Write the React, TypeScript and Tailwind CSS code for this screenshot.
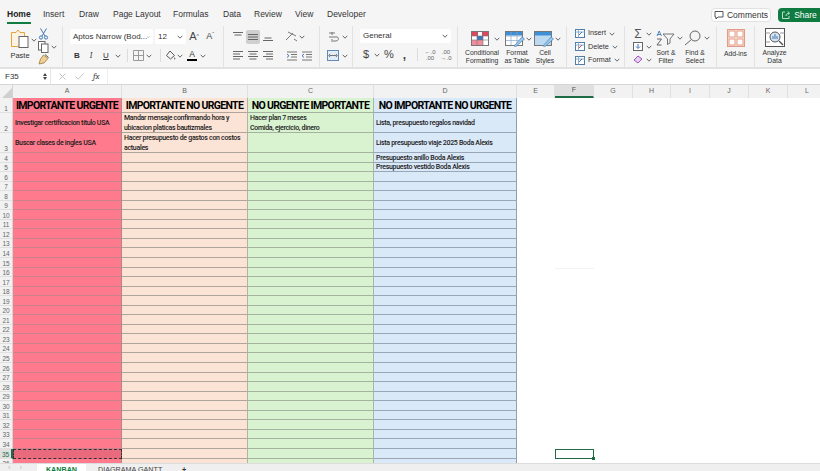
import React from "react";

const Chev = ({ c = "" }: { c?: string }) => (
  <svg width="6" height="4" viewBox="0 0 6 4" className={c}>
    <path d="M0.7 0.8 L3 3.2 L5.3 0.8" fill="none" stroke="#666" strokeWidth="1" />
  </svg>
);

const Box = ({ w, children }: { w: string; children?: React.ReactNode }) => (
  <div className={`${w} h-full flex items-center justify-center shrink-0`}>{children}</div>
);

const Lines = ({ d }: { d: string }) => (
  <svg width="12" height="11" viewBox="0 0 12 11">
    <path d={d} stroke="#666" strokeWidth="1" fill="none" />
  </svg>
);

const Divider = () => <div className="w-px h-[13px] bg-[#dcdcdc] shrink-0" />;

const tabs: [string, string][] = [
  ["Home", "w-[36px]"],
  ["Insert", "w-[36px]"],
  ["Draw", "w-[34px]"],
  ["Page Layout", "w-[60px]"],
  ["Formulas", "w-[50px]"],
  ["Data", "w-[31px]"],
  ["Review", "w-[41px]"],
  ["View", "w-[32px]"],
  ["Developer", "w-[50px]"],
];

function TabBar() {
  return (
    <div className="h-[26px] flex items-start pl-[7px] bg-[#f5f5f5] shrink-0">
      {tabs.map(([t, w]) => (
        <div key={t} className={`${w} pt-[9px] text-[8.5px] leading-[11px] text-[#333] whitespace-nowrap`}>
          <span className={t === "Home" ? "inline-block border-b-2 border-[#107c41] pb-[2px] font-bold text-[#222]" : ""}>{t}</span>
        </div>
      ))}
      <div className="ml-auto flex items-center pt-[8px]">
        <div className="w-[60px] h-[14px] bg-white border border-[#e2e2e2] rounded-[4px] flex items-center justify-center gap-[3px] text-[8.5px] text-[#333]">
          <svg width="10" height="10" viewBox="0 0 10 10">
            <path d="M1 1.5 H9 V7 H4 L2 9 V7 H1 Z" fill="none" stroke="#444" strokeWidth="0.9" />
          </svg>
          Comments
        </div>
        <div className="ml-[7px] w-[42px] h-[14px] bg-[#0f7b41] rounded-l-[4px] flex items-center justify-center gap-[3px] text-[8.5px] text-white">
          <svg width="10" height="10" viewBox="0 0 10 10">
            <path d="M4 2 H1.5 V8.5 H8 V6 M5 6 C5 4 6 3.2 8 3.2 M6.7 1.5 L8.6 3.2 L6.7 5" fill="none" stroke="#cfe9da" strokeWidth="0.9" />
          </svg>
          Share
        </div>
      </div>
    </div>
  );
}

function Clipboard() {
  return (
    <div className="w-[62px] flex shrink-0 pl-[9px]">
      <div className="w-[22px] flex flex-col items-center pt-[3px]">
        <svg width="20" height="19" viewBox="0 0 20 19">
          <path d="M1.5 3.5 H6 L8 1 L10 3.5 H14.5 V17.5 H1.5 Z" fill="#fdf3e2" stroke="#e8a33d" strokeWidth="1" />
          <rect x="9" y="7.5" width="9" height="11" fill="#fff" stroke="#666" strokeWidth="1" />
        </svg>
        <div className="mt-[3px] text-[7.5px] leading-[9px] text-[#333]">Paste</div>
      </div>
      <div className="w-[6px] pt-[12px]"><Chev /></div>
      <div className="flex flex-col items-start pl-[1px] pt-[2px] gap-[1px]">
        <svg width="11" height="12" viewBox="0 0 11 12">
          <path d="M2.5 0.5 L7 8 M8.5 0.5 L4 8" stroke="#3f76b5" strokeWidth="1" />
          <circle cx="3" cy="9.5" r="1.6" fill="none" stroke="#3f76b5" />
          <circle cx="8" cy="9.5" r="1.6" fill="none" stroke="#3f76b5" />
        </svg>
        <div className="flex items-center gap-[2px]">
          <svg width="11" height="12" viewBox="0 0 11 12">
            <rect x="0.5" y="0.5" width="6.5" height="8.5" fill="#fff" stroke="#666" />
            <rect x="3.5" y="3" width="6.5" height="8.5" fill="#fff" stroke="#666" />
          </svg>
          <Chev />
        </div>
        <svg width="11" height="11" viewBox="0 0 11 11">
          <path d="M5.5 1 L10 4.5 L6 9 L1 10 L2.5 5 Z" fill="#f0cf94" stroke="#9b7a3d" strokeWidth="0.8" />
          <path d="M7 0.5 L10.5 3.5" stroke="#555" />
        </svg>
      </div>
    </div>
  );
}

function FontGroup() {
  return (
    <div className="w-[161px] flex flex-col gap-[4px] pl-[7px] pt-[3px] shrink-0 border-l border-[#e2e2e2]">
      <div className="h-[15px] flex items-center">
        <div className="w-[83px] h-full bg-white rounded-[2px] flex items-center justify-between px-[3px] text-[8px] text-[#333] whitespace-nowrap">
          Aptos Narrow (Bod... <Chev />
        </div>
        <div className="ml-[2px] w-[31px] h-full bg-white rounded-[2px] flex items-center justify-between px-[3px] text-[8px] text-[#333]">
          12 <Chev />
        </div>
        <Box w="w-[16px]"><span className="text-[11px] text-[#444]">A<sup className="text-[5px]">^</sup></span></Box>
        <Box w="w-[16px]"><span className="text-[9px] text-[#444]">A<sup className="text-[5px]">ˇ</sup></span></Box>
      </div>
      <div className="h-[15px] flex items-center text-[8px] text-[#333]">
        <Box w="w-[14px]"><b>B</b></Box>
        <Box w="w-[14px]"><i className="font-serif">I</i></Box>
        <Box w="w-[16px]"><u>U</u></Box>
        <Box w="w-[8px]"><Chev /></Box>
        <div className="ml-[5px] mr-[3px]"><Divider /></div>
        <Box w="w-[14px]">
          <svg width="11" height="11" viewBox="0 0 11 11">
            <path d="M0.5 0.5 H10.5 V10.5 H0.5 Z M5.5 0.5 V10.5 M0.5 5.5 H10.5" fill="none" stroke="#999" />
          </svg>
        </Box>
        <Box w="w-[8px]"><Chev /></Box>
        <div className="ml-[7px] mr-[3px]"><Divider /></div>
        <Box w="w-[12px]">
          <svg width="11" height="11" viewBox="0 0 11 11">
            <path d="M5 1 L9.5 5.5 L5.5 9 L1.5 5.5 Z" fill="none" stroke="#555" />
            <path d="M9.5 7 L10.5 9 L9 9.5 Z" fill="#555" />
          </svg>
        </Box>
        <Box w="w-[8px]"><Chev /></Box>
        <div className="ml-[2px] w-[12px] flex flex-col items-center leading-[8px] text-[#333] text-[8.5px]">
          A
          <div className="mt-[1px] w-[10px] h-[2px] bg-black" />
        </div>
        <Box w="w-[9px]"><Chev /></Box>
      </div>
    </div>
  );
}

const L1 = "M1 1.5 H11 M2.5 4 H9.5";
const L2 = "M1 3.5 H11 M1 6 H11 M1 8.5 H11";
const L3 = "M2.5 7 H9.5 M1 9.5 H11";
const A1 = "M1 1.5 H11 M1 4 H8 M1 6.5 H11 M1 9 H8";
const A2 = "M1 1.5 H11 M2.5 4 H9.5 M1 6.5 H11 M2.5 9 H9.5";
const A3 = "M1 1.5 H11 M4 4 H11 M1 6.5 H11 M4 9 H11";

function AlignGroup() {
  return (
    <div className="w-[96px] flex flex-col gap-[4px] pl-[6px] pt-[3px] shrink-0 border-l border-[#e2e2e2]">
      <div className="h-[15px] flex items-center">
        <Box w="w-[15px]"><Lines d={L1} /></Box>
        <div className="w-[14px] h-[14px] ml-[1px] bg-[#cfcfcf] rounded-[2px] flex items-center justify-center"><Lines d={L2} /></div>
        <Box w="w-[16px]"><Lines d={L3} /></Box>
        <div className="ml-[8px] h-full"><Box w="w-[14px]">
          <svg width="13" height="11" viewBox="0 0 13 11">
            <path d="M1 9 L8 2 M3 1 L11 5 M9 8 L12 10" stroke="#777" fill="none" />
          </svg>
        </Box></div>
        <Box w="w-[8px]"><Chev /></Box>
      </div>
      <div className="h-[15px] flex items-center">
        <Box w="w-[15px]"><Lines d={A1} /></Box>
        <Box w="w-[15px]"><Lines d={A2} /></Box>
        <Box w="w-[16px]"><Lines d={A3} /></Box>
        <div className="ml-[8px] h-full"><Box w="w-[15px]">
          <svg width="12" height="10" viewBox="0 0 12 10"><path d="M1 1 H11 M5 3.5 H11 M5 6 H11 M1 9 H11" stroke="#777" fill="none" /><path d="M1 3 L3 4.7 L1 6.5" stroke="#3f76b5" fill="none" /></svg>
        </Box></div>
        <Box w="w-[15px]">
          <svg width="12" height="10" viewBox="0 0 12 10"><path d="M1 1 H11 M5 3.5 H11 M5 6 H11 M1 9 H11" stroke="#777" fill="none" /><path d="M3 3 L1 4.7 L3 6.5" stroke="#3f76b5" fill="none" /></svg>
        </Box>
      </div>
    </div>
  );
}

function WrapGroup() {
  return (
    <div className="w-[33px] flex flex-col gap-[4px] pl-[6px] pt-[3px] shrink-0 border-l border-[#e2e2e2]">
      <div className="h-[15px] flex items-center">
        <Box w="w-[14px]">
          <svg width="11" height="12" viewBox="0 0 11 12"><path d="M1 2 H7 M1 6 H9 C11 6 11 10 8 10 H5 M4 1 V4 M4 8 V11" stroke="#777" fill="none" /></svg>
        </Box>
        <Box w="w-[9px]"><Chev /></Box>
      </div>
      <div className="h-[15px] flex items-center">
        <Box w="w-[14px]">
          <svg width="12" height="11" viewBox="0 0 12 11"><rect x="0.5" y="0.5" width="11" height="10" fill="#e3edf6" stroke="#5f8bb5" /><path d="M2.5 5.5 H9.5 M3 4 L1.8 5.5 L3 7 M9 4 L10.2 5.5 L9 7" stroke="#555" strokeWidth="0.8" fill="none" /></svg>
        </Box>
        <Box w="w-[9px]"><Chev /></Box>
      </div>
    </div>
  );
}

function NumberGroup() {
  return (
    <div className="w-[105px] flex flex-col gap-[4px] pl-[7px] pt-[3px] shrink-0 border-l border-[#e2e2e2]">
      <div className="h-[14px] w-[91px] bg-white rounded-[2px] flex items-center justify-between px-[3px] text-[8px] text-[#333]">
        General <Chev />
      </div>
      <div className="h-[15px] flex items-center text-[#444]">
        <Box w="w-[12px]"><span className="text-[11px]">$</span></Box>
        <Box w="w-[10px]"><Chev /></Box>
        <Box w="w-[14px]"><span className="text-[11px]">%</span></Box>
        <Box w="w-[17px]"><span className="text-[12px] font-bold leading-[10px]">,</span></Box>
        <div className="ml-[4px] mr-[4px]"><Divider /></div>
        <Box w="w-[16px]"><span className="text-[6px] leading-[6px] text-center text-[#666]">←.0<br />.00</span></Box>
        <Box w="w-[16px]"><span className="text-[6px] leading-[6px] text-center text-[#666]">.00<br />→.0</span></Box>
      </div>
    </div>
  );
}

const Lbl = ({ a, b }: { a: string; b?: string }) => (
  <div className="text-[6.8px] leading-[8px] text-center text-[#333] whitespace-nowrap">
    {a}
    {b && <br />}
    {b}
  </div>
);

function TableIcon({ kind }: { kind: "cond" | "table" | "styles" }) {
  return (
    <svg width="20" height="16" viewBox="0 0 20 16">
      {kind === "cond" ? (
        <>
          <rect x="0.5" y="0.5" width="17" height="14" fill="#fff" stroke="#777" />
          <rect x="1" y="1" width="6" height="4" fill="#e0475b" />
          <rect x="11" y="1" width="6" height="4" fill="#e0475b" />
          <rect x="6" y="5" width="6" height="4" fill="#3f76b5" />
          <rect x="1" y="9" width="11" height="5" fill="#f08c9c" />
          <path d="M6 1 V14 M12 1 V14 M1 5 H17 M1 9 H17" stroke="#777" strokeWidth="0.6" />
        </>
      ) : kind === "table" ? (
        <>
          <rect x="0.5" y="0.5" width="17" height="14" fill="#fff" stroke="#777" />
          <rect x="1" y="1" width="16" height="3.5" fill="#3f8fd6" />
          <path d="M6 1 V14 M12 1 V14 M1 5 H17 M1 9.5 H17" stroke="#8aa8c4" strokeWidth="0.7" />
          <path d="M9 15 L17 6 L19.5 8 L11 15.5 Z" fill="#9cc6ea" stroke="#4a84b8" strokeWidth="0.7" />
        </>
      ) : (
        <>
          <rect x="0.5" y="0.5" width="17" height="14" fill="#bcd9f2" stroke="#777" />
          <rect x="1" y="1" width="16" height="3.5" fill="#3f8fd6" />
          <path d="M9 15 L17 6 L19.5 8 L11 15.5 Z" fill="#9cc6ea" stroke="#4a84b8" strokeWidth="0.7" />
        </>
      )}
    </svg>
  );
}

function StylesGroup() {
  return (
    <div className="w-[109px] flex pt-[4px] shrink-0 border-l border-[#e2e2e2]">
      <div className="w-[46px] flex flex-col items-center pl-[2px]">
        <div className="h-[17px] flex items-center gap-[3px] pl-[6px]"><TableIcon kind="cond" /><Chev /></div>
        <div className="mt-[2px]"><Lbl a="Conditional" b="Formatting" /></div>
      </div>
      <div className="w-[26px] flex flex-col items-center">
        <div className="h-[17px] flex items-center gap-[1px] pl-[2px]"><TableIcon kind="table" /><Chev /></div>
        <div className="mt-[2px]"><Lbl a="Format" b="as Table" /></div>
      </div>
      <div className="w-[30px] flex flex-col items-center">
        <div className="h-[17px] flex items-center gap-[1px] pl-[4px]"><TableIcon kind="styles" /><Chev /></div>
        <div className="mt-[2px]"><Lbl a="Cell" b="Styles" /></div>
      </div>
    </div>
  );
}

function CellsGroup() {
  const rows: [string, string][] = [
    ["Insert", "#3f76b5"],
    ["Delete", "#c9485b"],
    ["Format", "#3f76b5"],
  ];
  return (
    <div className="w-[58px] flex flex-col pl-[8px] pt-[1px] shrink-0 border-l border-[#e2e2e2]">
      {rows.map(([t, c]) => (
        <div key={t} className="h-[13.5px] flex items-center text-[7.2px] text-[#333]">
          <svg width="10" height="9" viewBox="0 0 10 9" className="mr-[3px]">
            <rect x="0.5" y="0.5" width="9" height="8" fill="#fff" stroke="#4e7ea8" />
            <path d="M0.5 3 H9.5 M3.5 0.5 V8.5" stroke="#8fb0cc" />
            <path d="M4 6 L7 3" stroke={c} />
          </svg>
          <span className="mr-[3px]">{t}</span>
          <Chev />
        </div>
      ))}
    </div>
  );
}

function EditGroup() {
  return (
    <div className="w-[92px] flex pl-[8px] pt-[1px] shrink-0 border-l border-[#e2e2e2]">
      <div className="w-[23px] flex flex-col">
        <div className="h-[13px] flex items-center gap-[3px]">
          <span className="w-[10px] text-[12px] leading-[12px] text-[#555] text-center">Σ</span><Chev />
        </div>
        <div className="h-[13px] flex items-center gap-[3px]">
          <svg width="10" height="9" viewBox="0 0 10 9"><rect x="0.5" y="0.5" width="9" height="8" fill="#fff" stroke="#666" /><path d="M5 2 V6 M3 4.5 L5 6.5 L7 4.5" stroke="#3f76b5" fill="none" /></svg>
          <Chev />
        </div>
        <div className="h-[13px] flex items-center gap-[3px]">
          <svg width="10" height="9" viewBox="0 0 10 9"><path d="M1 5 L5 1 L9 4 L5 8 Z" fill="#e6d3f0" stroke="#a34fc0" /></svg>
          <Chev />
        </div>
      </div>
      <div className="w-[28px] flex flex-col items-start pt-[2px]">
        <div className="h-[17px] flex items-center gap-[2px]">
          <svg width="19" height="16" viewBox="0 0 19 16">
            <path d="M1 6 L3.2 1 L5.4 6 M1.7 4.5 H4.7" stroke="#3f76b5" strokeWidth="0.9" fill="none" />
            <path d="M1 9 H5.5 L1 15 H5.5" stroke="#555" strokeWidth="0.9" fill="none" />
            <path d="M7 4 H18 L14 9 V13 L11.5 14.5 V9 Z" fill="none" stroke="#666" strokeWidth="0.9" />
          </svg>
          <Chev />
        </div>
        <div className="mt-[3px] w-[20px]"><Lbl a="Sort &" b="Filter" /></div>
      </div>
      <div className="w-[30px] flex flex-col items-start pt-[2px]">
        <div className="h-[17px] flex items-center gap-[2px]">
          <svg width="18" height="16" viewBox="0 0 18 16">
            <circle cx="11" cy="6" r="5" fill="none" stroke="#666" />
            <path d="M7.5 9.5 L1 15" stroke="#666" />
          </svg>
          <Chev />
        </div>
        <div className="mt-[3px] w-[22px]"><Lbl a="Find &" b="Select" /></div>
      </div>
    </div>
  );
}

function AddinsGroup() {
  return (
    <div className="w-[38px] flex flex-col items-center pt-[3px] shrink-0 border-l border-[#e2e2e2]">
      <svg width="18" height="18" viewBox="0 0 18 18">
        <rect x="0.5" y="0.5" width="17" height="17" fill="#fbe6df" stroke="#e39b86" />
        <rect x="2" y="2" width="6" height="6" fill="#fff" stroke="#e39b86" />
        <rect x="10" y="2" width="6" height="6" fill="#fff" stroke="#e39b86" />
        <rect x="2" y="10" width="6" height="6" fill="#fff" stroke="#e39b86" />
        <rect x="10" y="10" width="6" height="6" fill="#fff" stroke="#e39b86" />
      </svg>
      <div className="mt-[3px]"><Lbl a="Add-ins" /></div>
    </div>
  );
}

function AnalyzeGroup() {
  return (
    <div className="w-[40px] flex flex-col items-center pt-[2px] border-l border-[#e2e2e2]">
      <svg width="20" height="20" viewBox="0 0 20 20">
        <rect x="0.5" y="0.5" width="19" height="18" fill="#fff" stroke="#555" />
        <path d="M0.5 5 H5 M0.5 14 H5 M15 5 H19.5" stroke="#999" />
        <circle cx="10" cy="9" r="5" fill="#d7e6f5" stroke="#555" />
        <path d="M8 11 V8 M10 11 V6 M12 11 V8" stroke="#3f76b5" />
        <path d="M14 13 L18 17" stroke="#555" strokeWidth="1.4" />
      </svg>
      <div className="mt-[1px]"><Lbl a="Analyze" b="Data" /></div>
    </div>
  );
}

function FormulaBar() {
  return (
    <div className="h-[18px] shrink-0 flex bg-white border-t-2 border-b border-t-[#e2e2e2] border-b-[#d6d6d6] items-stretch">
      <div className="w-[51px] flex items-center justify-between pl-[5px] pr-[3px] text-[8px] text-[#333] border-r border-[#e6e6e6]">
        F35
        <span className="flex flex-col gap-[1px]">
          <span className="w-0 h-0 border-x-[2.5px] border-x-transparent border-b-[3px] border-b-[#444]" />
          <span className="w-0 h-0 border-x-[2.5px] border-x-transparent border-t-[3px] border-t-[#444]" />
        </span>
      </div>
      <div className="w-[57px] flex items-center pl-[8px] gap-[9px] border-r border-[#eeeeee]">
        <svg width="7" height="7" viewBox="0 0 7 7"><path d="M0.5 0.5 L6.5 6.5 M6.5 0.5 L0.5 6.5" stroke="#c4c4c4" /></svg>
        <svg width="9" height="7" viewBox="0 0 9 7"><path d="M0.5 3.5 L3.2 6.2 L8.5 0.5" stroke="#c4c4c4" fill="none" /></svg>
        <i className="font-serif text-[9px] text-[#444]">fx</i>
      </div>
      <div className="flex-1" />
    </div>
  );
}

const colHeads: [string, string][] = [
  ["A", "w-[109px]"],
  ["B", "w-[126px]"],
  ["C", "w-[126px]"],
  ["D", "w-[143px]"],
  ["E", "w-[38px]"],
  ["F", "w-[39px]"],
  ["G", "w-[39px]"],
  ["H", "w-[38px]"],
  ["I", "w-[39px]"],
  ["J", "w-[39px]"],
  ["K", "w-[39px]"],
  ["L", "w-[39px]"],
];

function ColumnHeader() {
  return (
    <div className="h-[13px] flex shrink-0 bg-[#f2f2f2]">
      <div className="w-[13px] shrink-0 flex items-end justify-end border-r border-[#d4d4d4]">
        <svg width="10" height="10" viewBox="0 0 10 10"><path d="M10 0 V10 H0 Z" fill="#d0d0d0" /></svg>
      </div>
      {colHeads.map(([c, w]) => (
        <div
          key={c}
          className={`${w} shrink-0 flex items-center justify-center text-[7px] border-r border-[#e0e0e0] ${
            c === "F" ? "bg-[#e0e0e0] border-b-2 border-b-[#1f6b45] text-[#555]" : "text-[#666]"
          }`}
        >
          {c}
        </div>
      ))}
    </div>
  );
}

const cellBase = "shrink-0 px-[2px] flex items-center overflow-hidden whitespace-nowrap text-[#1a1a1a]";
const lines = "border-r border-b";
const colA = `w-[109px] bg-[#ff7a8c] ${lines} border-b-[#c9818b] border-r-[#b9848a]`;
const colA35 = "w-[109px] bg-[#e86a7c] border-[1.5px] border-dashed border-[#333]";
const colB = `w-[126px] bg-[#fbe3d6] ${lines} border-b-[#b0a59b] border-r-[#b8b0a8]`;
const colC = `w-[126px] bg-[#d9f2d0] ${lines} border-b-[#a3b39f] border-r-[#a8b8a4]`;
const colD = `w-[143px] bg-[#dae9f8] ${lines} border-b-[#98a6b8] border-r-[#8f9db0]`;

const headFont = "font-['Roboto',sans-serif] font-bold text-[10.5px] tracking-[-0.68px] justify-center text-black pt-[2px]";
const bodyFont = "font-['Roboto',sans-serif] font-medium text-[7px] tracking-[-0.3px] leading-[10px] pt-[1px]";

function RowNum({ n, h }: { n: number; h: string }) {
  return (
    <div
      className={`w-[13px] ${h} shrink-0 flex items-end justify-center text-[6.5px] leading-[6px] border-b border-[#e0e0e0] ${
        n === 35 ? "bg-[#e0e0e0] text-[#1f6b45] border-r-2 border-r-[#1f6b45]" : "bg-[#f2f2f2] text-[#666] border-r border-r-[#d4d4d4]"
      }`}
    >
      {n}
    </div>
  );
}

function Row({ n, texts, h }: { n: number; texts: React.ReactNode[]; h: string }) {
  const a35 = n === 35;
  return (
    <div className={`flex ${h} shrink-0`}>
      <RowNum n={n} h={h} />
      <div className={`${cellBase} ${bodyFont} ${a35 ? colA35 : colA}`}>{texts[0]}</div>
      <div className={`${cellBase} ${bodyFont} ${colB}`}>{texts[1]}</div>
      <div className={`${cellBase} ${bodyFont} ${colC}`}>{texts[2]}</div>
      <div className={`${cellBase} ${bodyFont} ${colD}`}>{texts[3]}</div>
      <div className="w-[38px] shrink-0" />
      <div
        className={`w-[39px] shrink-0 relative ${
          a35 ? "border-[1.5px] border-[#1f6b45]" : n === 16 ? "border-t border-[#f2f2f2]" : ""
        }`}
      >
        {a35 && <div className="absolute -right-[2px] -bottom-[2px] w-[3px] h-[3px] bg-[#1f6b45]" />}
      </div>
    </div>
  );
}

const two = (a: string, b: string) => (
  <div>
    {a}
    <br />
    {b}
  </div>
);

function Sheet() {
  const small = Array.from({ length: 33 }, (_, i) => i + 4);
  return (
    <div className="flex-1 bg-white overflow-hidden">
      <div className="flex h-[15px] shrink-0">
        <RowNum n={1} h="h-[15px]" />
        <div className={`${cellBase} ${headFont} ${colA}`}>IMPORTANTE URGENTE</div>
        <div className={`${cellBase} ${headFont} ${colB}`}>IMPORTANTE NO URGENTE</div>
        <div className={`${cellBase} ${headFont} ${colC}`}>NO URGENTE IMPORTANTE</div>
        <div className={`${cellBase} ${headFont} ${colD}`}>NO IMPORTANTE NO URGENTE</div>
      </div>
      <Row
        n={2}
        h="h-[20px]"
        texts={[
          "Investigar certificacion titulo USA",
          two("Mandar mensaje confirmando hora y", "ubicacion platicas bautizmales"),
          two("Hacer plan 7 meses", "Comida, ejercicio, dinero"),
          "Lista, presupuesto regalos navidad",
        ]}
      />
      <Row
        n={3}
        h="h-[20px]"
        texts={[
          "Buscar clases de ingles USA",
          two("Hacer presupuesto  de gastos con costos", "actuales"),
          "",
          "Lista presupuesto viaje 2025 Boda Alexis",
        ]}
      />
      {small.map((n) => (
        <Row
          key={n}
          n={n}
          h="h-[9.55px]"
          texts={["", "", "", n === 4 ? "Presupuesto anillo Boda Alexis" : n === 5 ? "Presupuesto vestido Boda Alexis" : ""]}
        />
      ))}
    </div>
  );
}

function Footer() {
  return (
    <div className="h-[8px] shrink-0 bg-[#efefef] border-t border-[#dcdcdc] flex overflow-hidden text-[7.2px] leading-[9px]">
      <div className="w-[37px] flex items-center pl-[8px] gap-[9px] text-[#bbb]">
        <span>‹</span>
        <span>›</span>
      </div>
      <div className="w-[49px] bg-white pt-[1px] text-center font-bold text-[#107c41]">KANBAN</div>
      <div className="w-[86px] pl-[12px] pt-[1px] text-[#444] whitespace-nowrap">DIAGRAMA GANTT</div>
      <div className="w-[24px] pt-[1px] text-center text-[#333] font-bold">+</div>
    </div>
  );
}

export default function App() {
  return (
    <div className="w-[820px] h-[471px] overflow-hidden flex flex-col bg-white font-['Liberation_Sans',sans-serif]">
      <TabBar />
      <div className="h-[41px] shrink-0 flex bg-[#f5f5f5]">
        <Clipboard />
        <FontGroup />
        <AlignGroup />
        <WrapGroup />
        <NumberGroup />
        <StylesGroup />
        <CellsGroup />
        <EditGroup />
        <AddinsGroup />
        <AnalyzeGroup />
      </div>
      <FormulaBar />
      <ColumnHeader />
      <Sheet />
      <Footer />
    </div>
  );
}
